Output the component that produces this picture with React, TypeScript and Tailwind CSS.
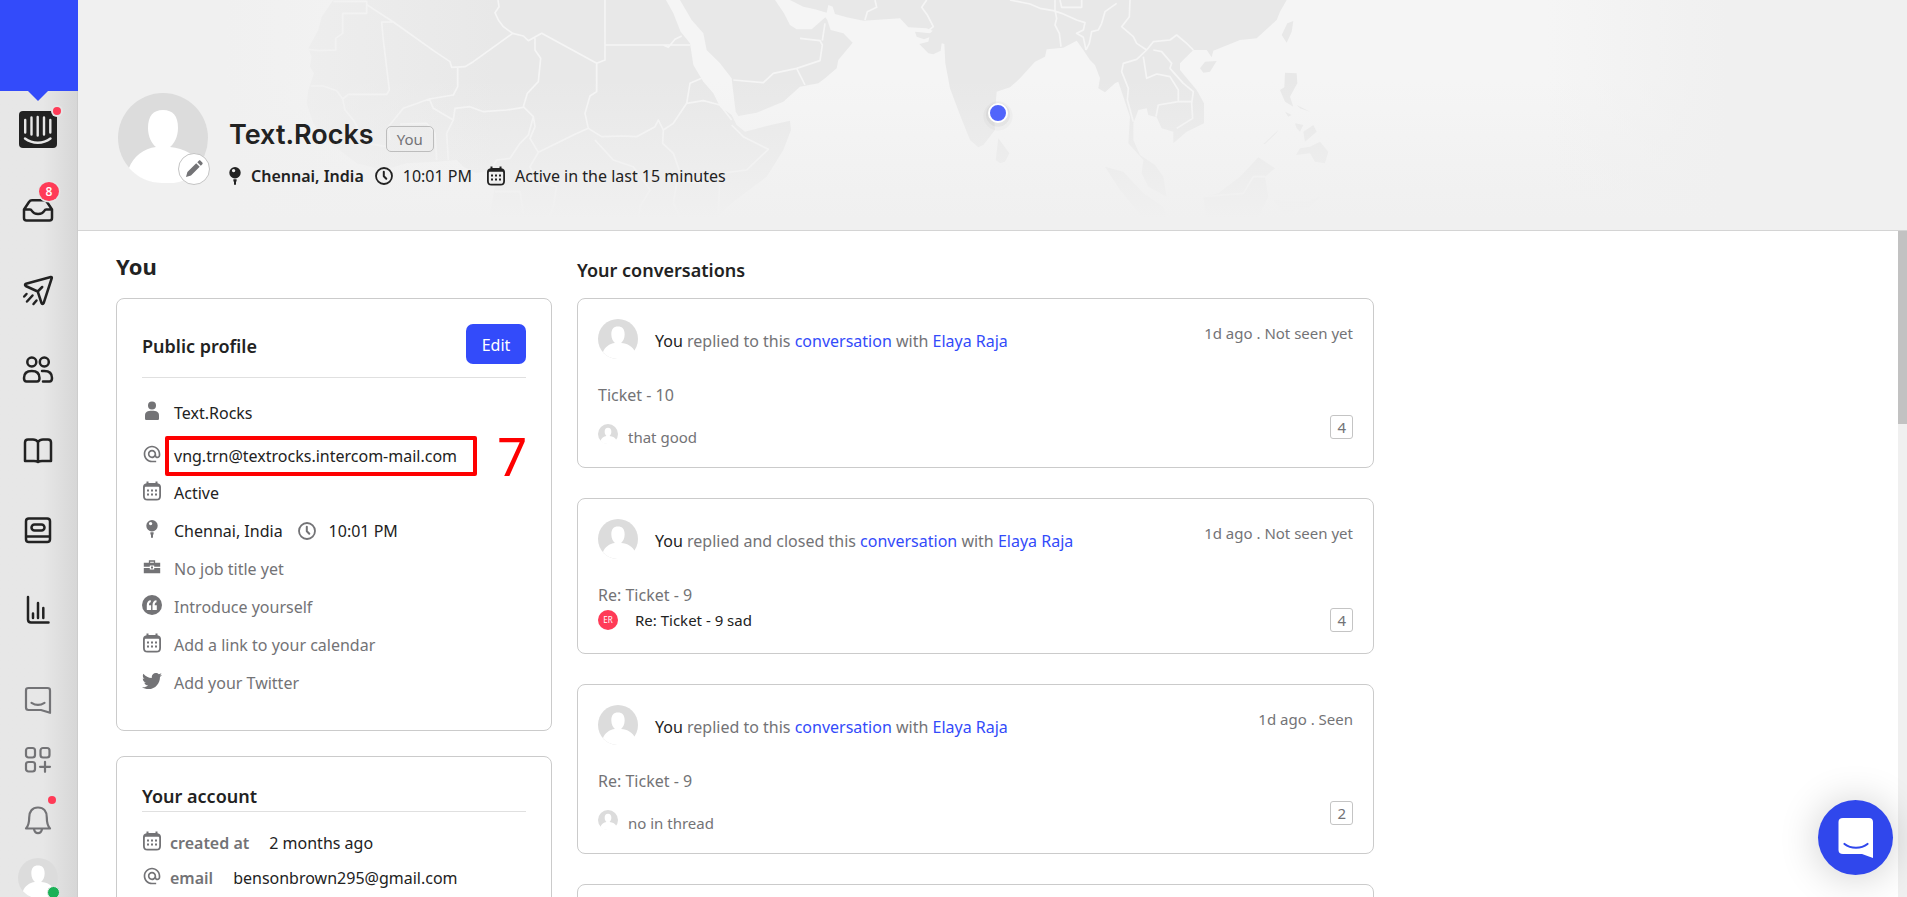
import React from 'react';
import { FaTwitter } from 'react-icons/fa';
import { MdAlternateEmail } from 'react-icons/md';

type IconProps = { className?: string };

type Conversation = {
    id: number;
    action: string;
    person: string;
    meta: string;
    subject: string;
    preview: string;
    initials?: string;
    count: number;
};

const CONVERSATIONS: Conversation[] = [
    { id: 1, action: 'replied to this', person: 'Elaya Raja', meta: '1d ago . Not seen yet', subject: 'Ticket - 10', preview: 'that good', count: 4 },
    { id: 2, action: 'replied and closed this', person: 'Elaya Raja', meta: '1d ago . Not seen yet', subject: 'Re: Ticket - 9', preview: 'Re: Ticket - 9 sad', initials: 'ER', count: 4 },
    { id: 3, action: 'replied to this', person: 'Elaya Raja', meta: '1d ago . Seen', subject: 'Re: Ticket - 9', preview: 'no in thread', count: 2 },
];

const Avatar: React.FC<IconProps> = ({ className }) => (
    <svg viewBox="0 0 90 90" className={className} aria-hidden="true">
        <circle cx="45" cy="45" r="45" fill="#dcdcdc" />
        <path
            d="M45 17c10 0 15 6 15 18 0 9-4 16-8 19 14 1 27 8 32 21A45 45 0 0 1 45 90 45 45 0 0 1 11 75c4-11 15-20 27-21-4-3-8-10-8-19 0-12 5-18 15-18z"
            fill="#fff"
        />
    </svg>
);

const CalendarIcon: React.FC<IconProps> = ({ className }) => (
    <svg viewBox="0 0 20 20" className={className} aria-hidden="true">
        <path d="M4.500 .5h2v1.400h7V.5h2v1.700C17.800 2.600 19 4 19 6v9c0 3-1.500 4.500-4.500 4.500h-9C2.500 19.500 1 18 1 15V6c0-2 1.200-3.400 3.500-3.800zM2.800 7v8c0 2 .8 2.800 2.700 2.800h9c1.900 0 2.700-.8 2.700-2.800V7c0-.8-.4-1.200-1-1.200H3.800c-.6 0-1 .4-1 1.200z" fill="currentColor" fillRule="evenodd" />
        <path d="M5 8.500h2v2H5zm4 0h2v2H9zm4 0h2v2h-2zM5 12.500h2v2H5zm4 0h2v2H9zm4 0h2v2h-2z" fill="currentColor" />
    </svg>
);

const PinIcon: React.FC<IconProps> = ({ className }) => (
    <svg viewBox="0 0 20 20" className={className} aria-hidden="true">
        <path d="M10 1a5.700 5.700 0 1 1 0 11.400A5.700 5.700 0 0 1 10 1zM8.600 2.900a1.700 1.700 0 1 0 0 3.400 1.700 1.700 0 0 0 0-3.400z" fill="currentColor" fillRule="evenodd" />
        <path d="M8.400 13.300h3.200v1.600l-.6 1.200V18a1 1 0 0 1-2 0v-1.900l-.6-1.200z" fill="currentColor" />
    </svg>
);

const ClockIcon: React.FC<IconProps> = ({ className }) => (
    <svg viewBox="0 0 20 20" className={className} fill="none" stroke="currentColor" strokeLinecap="round" strokeLinejoin="round" aria-hidden="true">
        <circle cx="10" cy="10" r="8" strokeWidth="1.800" />
        <path d="M9.800 5.800v4.400l2.500 2.600" strokeWidth="2" />
    </svg>
);

const PersonIcon: React.FC<IconProps> = ({ className }) => (
    <svg viewBox="0 0 20 20" className={className} fill="currentColor" aria-hidden="true">
        <circle cx="10" cy="4.500" r="4" />
        <path d="M3 14.500c0-3.500 2.500-4.800 7-4.800s7 1.300 7 4.800v3c0 1-.6 1.600-1.600 1.600H4.600c-1 0-1.600-.6-1.600-1.600z" />
    </svg>
);

const BriefcaseIcon: React.FC<IconProps> = ({ className }) => (
    <svg viewBox="0 0 20 20" className={className} aria-hidden="true">
        <path d="M7.500 6V4h5v2" fill="none" stroke="currentColor" strokeWidth="1.300" />
        <path d="M1.800 5.800h16.400v4h-6V8.500H7.800v1.300h-6zM1.800 10.900h6v1.600h4.400v-1.600h6v5.300H1.800z" fill="currentColor" />
        <path d="M9 9.400h2v2.200H9z" fill="currentColor" />
    </svg>
);

const QuoteIcon: React.FC<IconProps> = ({ className }) => (
    <svg viewBox="0 0 20 20" className={className} aria-hidden="true">
        <circle cx="10" cy="10" r="10" fill="currentColor" />
        <path d="M8.800 5.300c-2.600 0-4 2-4 5V15h4.300v-4.700H7c0-1.700.5-2.700 1.800-3zM14.500 5.300c-2.600 0-4 2-4 5V15h4.300v-4.700h-2.100c0-1.700.5-2.700 1.800-3z" fill="#fff" />
    </svg>
);

const PencilIcon: React.FC<IconProps> = ({ className }) => (
    <svg viewBox="0 0 20 20" className={className} fill="currentColor" aria-hidden="true">
        <path d="M2 18l1.400-5L12.200 4.300l3.500 3.500L7 16.600zM13.300 3.200l1.500-1.500c.5-.5 1.200-.5 1.700 0l1.800 1.800c.5.5.5 1.200 0 1.700l-1.500 1.500z" />
    </svg>
);

const IntercomLogo: React.FC = () => (
    <>
        <rect x="1" y="1" width="38" height="37" rx="4" fill="#222" stroke="none" />
        <g stroke="#e7e7e7" strokeWidth="2.400" strokeLinecap="round" fill="none">
            <path d="M7.200 10v12.500M13.500 7.500v17M19.700 7v18.500M26 7.500v17M32.300 10v12.500" />
            <path d="M7 28.500c7.500 5.600 18 5.600 25.500 0" />
        </g>
        <circle cx="39" cy="1" r="6" fill="#e5e5e5" stroke="none" />
        <circle cx="39" cy="1" r="4" fill="#ff3b57" stroke="none" />
    </>
);

// Main navigation, each drawn on a 40x40 grid
const NAV_ITEMS = [
    { label: 'Home', icon: <IntercomLogo /> },
    {
        label: 'Inbox',
        icon: (
            <>
                <path d="M6 19.500v8.500c0 1.500 1 2.500 2.500 2.500h23c1.500 0 2.500-1 2.500-2.500v-8.500l-5-7.500c-.8-1.200-1.500-1.700-3-1.700H14c-1.500 0-2.200.5-3 1.700zh6c1 0 1.500.6 2 1.500 2.200 4 10 4 12.200 0 .5-.9 1-1.500 2-1.500H34" />
                <ellipse cx="31" cy="1.500" rx="11.500" ry="11" fill="#e5e5e5" stroke="none" />
                <ellipse cx="31" cy="1.500" rx="10" ry="9.500" fill="#ff3b57" stroke="none" />
                <text x="31" y="6" textAnchor="middle" fill="#fff" stroke="none" fontSize="12" fontFamily="Open Sans, sans-serif" fontWeight="600">8</text>
            </>
        ),
    },
    {
        label: 'Outbound',
        icon: <path d="M32.800 7L8 13.800c-1.200.4-1.300 1.600-.3 2.200l12 5.500L23.500 33c.4 1.200 1.700 1.200 2.200 0L33.800 8c.2-.8-.2-1.200-1-1zM19.700 21.500l4.500-4.500M14.500 25.500l-5.500 6M8.500 24l-2.300 2.500M18.500 30.500l-3 3.500" />,
    },
    {
        label: 'Contacts',
        icon: (
            <>
                <circle cx="13.800" cy="12" r="4.500" />
                <circle cx="26.300" cy="12" r="4.500" />
                <path d="M6 28c0-5 3-7 7.800-7s7.700 2 7.700 7c0 2.600-.7 3.500-2.500 3.500H8.500C6.700 31.500 6 30.600 6 28zM24 21h2.300c4.800 0 7.700 2 7.700 7 0 2.600-.7 3.500-2.500 3.500H25" />
            </>
        ),
    },
    {
        label: 'Articles',
        icon: <path d="M20 12c-1.200-1.700-3-2.500-5-2.500h-5c-2 0-3 1-3 3V31h9c2 0 3 .2 4 1 1-.8 2-1 4-1h9V12.500c0-2-1-3-3-3h-5c-2 0-3.800.8-5 2.500zv19.500" />,
    },
    {
        label: 'Resources',
        icon: (
            <>
                <rect x="8" y="8.500" width="24" height="23.500" rx="2.800" />
                <rect x="13.500" y="14.500" width="13" height="6" rx="3" />
                <path d="M8.500 26.500h23" />
            </>
        ),
    },
    { label: 'Reports', icon: <path d="M10 7v22.500c0 2 .8 3 3 3h17.500M15 23.500V28M20 13v15M25.300 18v10" /> },
];

const FOOTER_ITEMS = [
    {
        label: 'Messenger',
        icon: (
            <>
                <path d="M32 32.800V10.500c0-1.800-.7-2.500-2.500-2.500h-19C8.700 8 8 8.700 8 10.500v17c0 1.800.7 2.500 2.500 2.500H23z" />
                <path d="M13.500 22.800c4 2.600 9 2.600 13 0" />
            </>
        ),
    },
    {
        label: 'App store',
        icon: (
            <>
                <rect x="8" y="8" width="9" height="9.500" rx="2.500" />
                <rect x="22.500" y="8" width="9" height="9.500" rx="2.500" />
                <rect x="8" y="22" width="9" height="9.500" rx="2.500" />
                <path d="M27 21.800v10M22 26.800h10" />
            </>
        ),
    },
    {
        label: 'Notifications',
        icon: (
            <>
                <path d="M8 28.500c2.800-3 3.200-5.500 3.200-11 0-6 3-10 8.800-10s8.800 4 8.800 10c0 5.500.4 8 3.200 11zM16 29c.5 3 2 4.200 4 4.200s3.500-1.200 4-4.200" />
                <circle cx="34" cy="0" r="4" fill="#ff3b57" stroke="none" />
            </>
        ),
    },
];

const Sidebar: React.FC = () => (
    <nav className="flex h-full w-[78px] shrink-0 flex-col items-center overflow-hidden bg-[#e7e7e7] bg-linear-to-r from-[#e7e7e7] from-55% to-[#d6d6d6] pr-0.5 shadow-[inset_-1px_0_#cdcdcd]">
        <div className="relative -mb-px h-[91px] w-[78px] shrink-0 self-start bg-[#334bfa]">
            <span className="absolute top-full left-7 border-x-10 border-t-10 border-x-transparent border-t-[#334bfa]" />
        </div>
        {NAV_ITEMS.map((item) => (
            <button key={item.label} aria-label={item.label} className="flex h-20 w-full shrink-0 items-center justify-center text-[#222]">
                <svg viewBox="0 0 40 40" className="size-10 overflow-visible" fill="none" stroke="currentColor" strokeWidth="2.500" strokeLinecap="round" strokeLinejoin="round">
                    {item.icon}
                </svg>
            </button>
        ))}
        <div className="mt-5 flex w-full flex-col items-center">
            {FOOTER_ITEMS.map((item) => (
                <button key={item.label} aria-label={item.label} className="flex h-[60px] w-full shrink-0 items-center justify-center text-[#737376]">
                    <svg viewBox="0 0 40 40" className="size-10 overflow-visible" fill="none" stroke="currentColor" strokeWidth="2.200" strokeLinecap="round" strokeLinejoin="round">
                        {item.icon}
                    </svg>
                </button>
            ))}
            <button aria-label="Account" className="relative mt-2 shrink-0">
                <Avatar className="size-10" />
                <span className="absolute right-[-2px] bottom-[-1px] size-[13px] rounded-full border border-[#e7e7e7] bg-[#1bb157]" />
            </button>
        </div>
    </nav>
);

const WorldMap: React.FC = () => (
    <svg viewBox="0 0 4200 690" className="absolute top-0 left-0 h-[230px] w-[1400px]" aria-hidden="true">
        <g transform="translate(636 0)">
            <g fill="#e8e8e8">
                <path d="M130 0L95 50 85 90 55 145 65 170 60 200 72 220 55 270 50 310 70 370 110 420 200 490 280 510 350 490 440 485 500 480 520 500 560 520 600 510 615 560 600 640 640 690H1265L1270 660 1330 605 1430 530 1480 450 1503 390 1500 362 1430 378 1365 395 1340 375 1325 345 1290 320 1270 280 1240 245 1210 195 1200 130 1172 95 1150 40 1128 0z" />
                <path d="M1170 0L1205 60 1240 100 1250 150 1290 190 1325 235 1328 262 1337 335 1345 348 1400 338 1480 305 1530 260 1585 250 1605 235 1640 205 1645 180 1688 128 1660 100 1622 90 1612 60 1606 52 1565 88 1520 88 1500 75 1482 40 1455 0z" />
            </g>
            <g fill="none" stroke="#f5f5f5" strokeWidth="5" strokeLinejoin="round">
                <path d="M130 4H230V40H158V100L137 115V150L85 152 55 148M230 14L310 66 435 155 480 185 485 202 525 200 550 185 668 100 640 80 625 60 615 38 627 20 624 0M310 66H275L280 120 298 270 290 283H175L158 297 140 272 100 258 62 258M668 100L700 108 715 122 755 100 920 190 945 180V0M945 135H1120L1135 142 1155 118 1175 108M1120 135H1200M920 190V275L900 288 885 340 895 385 850 405 820 420 745 457 720 415 735 380 730 350 700 320 712 280 745 245 752 175 735 150 735 115M503 202V260L490 285 418 297 340 325 295 380 300 420M418 297L430 325 490 360 495 325 540 320 580 335 650 330 700 322M490 360L470 400 475 480M440 480L435 400 410 370 330 372M158 297L165 330 190 360 230 430 290 440M730 350L715 405 690 430 660 475 620 480 605 505M745 457L720 500 740 545 800 560 790 620 760 690M895 385L935 410 1000 408 1040 410 1095 380 1105 360 1120 390 1118 430 1150 460 1180 545 1240 550M915 420L970 480 1030 500 1080 570 1050 620 1045 690M1120 390L1150 370 1190 310 1200 250 1235 235M1190 310L1240 302 1290 315 1325 360M1325 375L1360 410 1435 448 1370 510 1290 520 1285 640M615 575H690L700 640M1160 550L1150 610 1180 670" />
                <path d="M1330 240L1420 248 1450 220 1520 205 1590 182 1597 135 1590 122 1530 115M1520 205L1545 255M1597 122L1605 70M1520 70L1500 60" />
            </g>
            <g transform="translate(1530 0)">
                <g fill="#e8e8e8">
                    <path d="M-30 0L10 20 45 28 80 38 85 15 98 20 105 42 140 52 190 62 300 55 325 82 380 85 398 92 390 100 345 95 350 110 372 118 388 112 385 125 358 132 385 160 400 163 422 152 425 130 433 132 436 190 450 265 480 345 510 420 535 442 550 435 585 390 583 360 590 275 630 262 660 235 705 185 735 170 740 148 790 143 830 122 850 150 870 180 885 195 900 235 895 265 915 277 945 250 955 245 970 290 990 350 985 430 1030 480 1025 520 1045 560 1100 590 1090 530 1065 495 1020 465 1000 420 1000 370 1015 330 1040 325 1045 345 1070 352 1085 385 1120 395 1120 430 1160 395 1212 370 1212 310 1190 270 1140 210 1140 190 1180 150 1220 150 1235 172 1240 152 1320 120 1370 115 1430 60 1440 35 1460 0z" />
                    <path d="M1200 205L1215 185 1250 183 1230 215 1210 218zM1480 63L1462 70 1445 105 1460 128 1475 95zM595 415L628 460 615 485 600 490 587 480zM1455 218L1490 220 1492 250 1470 290 1480 320 1455 305 1440 270 1453 262zM915 500L970 515 1030 580 1090 620 1110 690H1040L1015 635 960 570zM1210 590L1255 580 1320 530 1375 472 1425 505 1395 530 1405 590 1370 660H1220zM1488 465L1500 445 1530 440 1560 425 1585 455 1575 490 1545 485 1530 460zM1390 432L1435 390 1430 398 1395 432zM1485 370L1510 375 1500 395 1490 385zM1510 395L1540 375 1550 395 1515 425zM1490 315L1530 335 1500 325zM1455 335L1475 345 1465 350z" />
                    <path d="M1420 600L1520 605 1560 590 1530 620 1450 640z" opacity="0.500" />
                </g>
                <g fill="none" stroke="#f5f5f5" strokeWidth="5" strokeLinejoin="round">
                    <path d="M195 60L202 35 230 22 225 0M380 0L365 22 382 45 400 80 385 92M630 0L690 12 720 25 760 32 785 40 830 60 855 68 850 90 830 100 850 112 858 150M765 0V30L770 55 765 75 778 100 783 140M780 0L785 22H845V0M950 10L915 35 905 70 895 90 875 95 868 130 858 150M990 0L988 50 965 80 1000 110 1010 130 1040 150 1010 178 970 190 965 215 985 265 982 300 1000 365M1040 150L1060 125 1110 120 1130 105 1160 130 1180 150M1060 150L1085 155 1115 190 1110 205 1150 250 1180 275 1175 310 1178 355 1130 385M1030 170L1040 235 1070 222 1110 230 1135 270 1135 305 1175 305M1135 305L1075 315 1068 350M1210 590L1330 580 1360 530 1395 530" />
                </g>
                <circle cx="594" cy="348" r="44" fill="#000" opacity="0.030" />
                <circle cx="594" cy="344" r="36" fill="#000" opacity="0.060" />
            </g>
        </g>
    </svg>
);

const ProfileHeader: React.FC = () => (
    <header className="relative shrink-0 border-b border-[#d4d4d4] bg-[#f5f5f5]">
        <WorldMap />
        <div className="absolute inset-0 bg-linear-to-b from-transparent from-35% to-[#f0f0f0] to-95%" />
        <div className="absolute inset-y-0 left-0 w-[420px] bg-linear-to-r from-[#f0f0f0] from-35% to-transparent" />
        <div className="absolute inset-y-0 right-0 w-[360px] bg-linear-to-l from-[#f0f0f0] from-50% to-transparent" />
        <span className="absolute top-[103px] left-[910px] size-5 rounded-full border-2 border-white bg-[#5165fb]" />
        <div className="relative flex items-start pt-[93px] pb-[42px] pl-10">
            <div className="relative">
                <Avatar className="size-[90px]" />
                <button aria-label="Edit photo" className="absolute right-[-2px] bottom-[-2px] flex size-8 items-center justify-center rounded-full border border-[#c4c4c4] bg-white text-[#737376]">
                    <PencilIcon className="size-5" />
                </button>
            </div>
            <div className="ml-[21px] pt-6">
                <div className="flex h-9 items-center gap-3">
                    <h1 className="font-[Inter,sans-serif] text-[27px] leading-9 font-semibold">Text.Rocks</h1>
                    <span className="mt-2 rounded-[5px] border border-[#bdbdbd] px-[10px] text-[15px] leading-6 text-[#737376]">You</span>
                </div>
                <div className="mt-[11px] flex items-center leading-6">
                    <PinIcon className="-ml-1 size-5" />
                    <span className="ml-[6px] font-semibold">Chennai, India</span>
                    <ClockIcon className="ml-[10px] size-5" />
                    <span className="ml-[9px]">10:01 PM</span>
                    <CalendarIcon className="ml-[14px] size-5" />
                    <span className="ml-[9px]">Active in the last 15 minutes</span>
                </div>
            </div>
        </div>
    </header>
);

const ProfileRow: React.FC<{ icon: React.ReactNode; muted?: boolean; children: React.ReactNode }> = ({ icon, muted, children }) => (
    <li className="flex h-[38px] items-center gap-3">
        <span className="text-[#737376]">{icon}</span>
        <span className={`mt-1 flex items-center ${muted ? 'text-[#737376]' : ''}`}>{children}</span>
    </li>
);

const PublicProfile: React.FC = () => (
    <section className="rounded-lg border border-[#cbcbcb] px-[25px] pt-[25px] pb-[22px]">
        <div className="flex items-center justify-between border-b border-[#e0e0e0] pb-[13px]">
            <h3 className="mt-1 text-[18px] font-semibold">Public profile</h3>
            <button className="h-10 w-[60px] rounded-[7px] bg-[#334bfa] pt-0.5 text-white">Edit</button>
        </div>
        <ul className="mt-[14px] mb-2">
            <ProfileRow icon={<PersonIcon className="size-5" />}>Text.Rocks</ProfileRow>
            <li className="relative mt-[5px] flex h-[37px] items-center gap-3">
                <MdAlternateEmail className="size-5 text-[#737376]" />
                <span className="mt-1">vng.trn@textrocks.intercom-mail.com</span>
                <div className="absolute top-px left-[23px] flex items-center">
                    <span className="h-10 w-[312px] rounded-xs border-4 border-[#fe0000]" />
                    <span className="ml-5 text-[53px] leading-10 text-[#fe0000]">7</span>
                </div>
            </li>
            <ProfileRow icon={<CalendarIcon className="size-5" />}>Active</ProfileRow>
            <ProfileRow icon={<PinIcon className="size-5" />}>
                Chennai, India
                <ClockIcon className="mr-3 ml-[14px] size-5 text-[#737376]" />
                10:01 PM
            </ProfileRow>
            <ProfileRow muted icon={<BriefcaseIcon className="size-5" />}>No job title yet</ProfileRow>
            <ProfileRow muted icon={<QuoteIcon className="size-5" />}>Introduce yourself</ProfileRow>
            <ProfileRow muted icon={<CalendarIcon className="size-5" />}>Add a link to your calendar</ProfileRow>
            <ProfileRow muted icon={<FaTwitter className="size-5" />}>Add your Twitter</ProfileRow>
        </ul>
    </section>
);

const YourAccount: React.FC = () => (
    <section className="mt-[25px] rounded-lg border border-[#cbcbcb] px-[25px] pt-[25px] pb-6">
        <h3 className="border-b border-[#e0e0e0] pb-px text-[18px] leading-7 font-semibold">Your account</h3>
        <dl className="mt-[11px]">
            <div className="flex h-[35px] items-center">
                <CalendarIcon className="size-5 text-[#737376]" />
                <dt className="mt-1 ml-2 font-semibold text-[#737376]">created at</dt>
                <dd className="mt-1 ml-5">2 months ago</dd>
            </div>
            <div className="flex h-[35px] items-center">
                <MdAlternateEmail className="size-5 text-[#737376]" />
                <dt className="mt-1 ml-2 font-semibold text-[#737376]">email</dt>
                <dd className="mt-1 ml-5">bensonbrown295@gmail.com</dd>
            </div>
        </dl>
    </section>
);

const ConversationCard: React.FC<{ conversation: Conversation }> = ({ conversation }) => {
    const { action, person, meta, subject, preview, initials, count } = conversation;
    return (
        <article className="rounded-lg border border-[#cbcbcb] p-5">
            <div className="flex h-10">
                <Avatar className="size-10" />
                <p className="mt-[10px] ml-[17px] leading-6 text-[#737376]">
                    <span className="text-[#222]">You</span> {action}{' '}
                    <a href="#conversation" className="text-[#334bfa]">conversation</a> with{' '}
                    <a href="#person" className="text-[#334bfa]">{person}</a>
                </p>
                <span className="mt-0.5 ml-auto text-[15px] leading-6 text-[#737376]">{meta}</span>
            </div>
            <p className="mt-6 leading-6 text-[#737376]">{subject}</p>
            {initials ? (
                <div className="flex h-[26px] items-center">
                    <span className="flex size-5 items-center justify-center rounded-full bg-[#ff3b57] text-[8px] text-white">{initials}</span>
                    <span className="ml-[17px] text-[15px]">{preview}</span>
                    <span className="ml-auto rounded-[3px] border border-[#c4c4c4] px-[6px] text-[15px] leading-[22px] text-[#737376]">{count}</span>
                </div>
            ) : (
                <div className="mt-[6px] flex h-[34px] items-center">
                    <Avatar className="mt-2 size-5" />
                    <span className="mt-[14px] ml-[10px] text-[15px] text-[#737376]">{preview}</span>
                    <span className="mt-0.5 ml-auto self-start rounded-[3px] border border-[#c4c4c4] px-[6px] text-[15px] leading-[22px] text-[#737376]">{count}</span>
                </div>
            )}
        </article>
    );
};

const App: React.FC = () => {
    return (
        <div className="flex h-screen overflow-hidden bg-white font-['Noto_Sans','Open_Sans',sans-serif] text-base text-[#222]">
            <Sidebar />
            <div className="flex min-w-0 flex-1 flex-col">
                <ProfileHeader />
                <div className="flex min-h-0 flex-1">
                    <main className="flex flex-1 items-start gap-[25px] overflow-hidden pl-[38px]">
                        <div className="w-[436px] shrink-0">
                            <h2 className="flex h-[67px] items-center pt-1 text-[22px] font-bold">You</h2>
                            <PublicProfile />
                            <YourAccount />
                        </div>
                        <div className="w-[797px]">
                            <h2 className="flex h-[67px] items-center pt-3 text-[18px] font-semibold">Your conversations</h2>
                            <div className="flex flex-col gap-[30px]">
                                {CONVERSATIONS.map((conversation) => (
                                    <ConversationCard key={conversation.id} conversation={conversation} />
                                ))}
                                <article className="h-[170px] rounded-lg border border-[#cbcbcb]" />
                            </div>
                        </div>
                    </main>
                    <div className="w-[9px] bg-[#f0f0f0]">
                        <div className="h-[193px] bg-[#c2c2c2]" />
                    </div>
                </div>
            </div>
            <button aria-label="Open messenger" className="fixed right-[14px] bottom-[22px] flex size-[75px] items-center justify-center rounded-full bg-[#3047ec] shadow-[0_2px_40px_rgba(0,0,0,0.2)]">
                <svg viewBox="0 0 36 40" className="h-10 w-9" aria-hidden="true">
                    <path d="M5 0h26c2.500 0 4 1.500 4 4v36l-11-4H5c-3 0-4.500-1.500-4.500-4V4C.5 1.500 2 0 5 0z" fill="#fff" />
                    <path d="M6.500 26c6.500 5 16.500 5 23 0" fill="none" stroke="#3047ec" strokeWidth="2.200" strokeLinecap="round" />
                </svg>
            </button>
        </div>
    );
};

export default App;
